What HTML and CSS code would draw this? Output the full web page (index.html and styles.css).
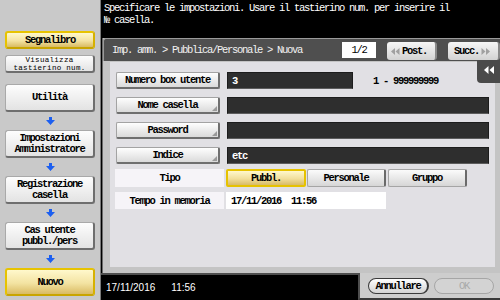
FILE: index.html
```html
<!DOCTYPE html>
<html lang="it">
<head>
<meta charset="utf-8">
<title>Nuova casella</title>
<link rel="stylesheet" href="styles.css">
</head>
<body>
<aside class="side">
  <div class="sbtn hl">Segnalibro</div>
  <div class="sbtn tiny">Visualizza<br>tastierino num.</div>
  <div class="flow">
    <div class="fbtn">Utilità</div>
    <div class="arr"><svg width="9" height="8" viewBox="0 0 9 8"><path d="M3 0h3v3h3L4.5 8 0 3h3z" fill="#1c5ff0"/></svg></div>
    <div class="fbtn">Impostazioni<br>Amministratore</div>
    <div class="arr"><svg width="9" height="8" viewBox="0 0 9 8"><path d="M3 0h3v3h3L4.5 8 0 3h3z" fill="#1c5ff0"/></svg></div>
    <div class="fbtn">Registrazione<br>casella</div>
    <div class="arr"><svg width="9" height="8" viewBox="0 0 9 8"><path d="M3 0h3v3h3L4.5 8 0 3h3z" fill="#1c5ff0"/></svg></div>
    <div class="fbtn">Cas utente<br>pubbl./pers</div>
    <div class="arr"><svg width="9" height="8" viewBox="0 0 9 8"><path d="M3 0h3v3h3L4.5 8 0 3h3z" fill="#1c5ff0"/></svg></div>
    <div class="fbtn hl">Nuovo</div>
  </div>
</aside>
<main class="main">
  <header class="msg">Specificare le impostazioni. Usare il tastierino num. per inserire il<br>№ casella.</header>
  <section class="panel">
    <div class="crumb">
      <span class="path">Imp. amm. &gt; Pubblica/Personale &gt; Nuova</span>
      <span class="page">1/2</span>
      <span class="nav post"><svg width="9" height="7" viewBox="0 0 9 7"><path d="M4 0v7L0 3.5zM8.5 0v7l-4-3.5z" fill="#a0a0a0"/></svg>Post.</span>
      <span class="nav succ">Succ.<svg width="9" height="7" viewBox="0 0 9 7"><path d="M0.5 0v7l4-3.5zM5 0v7l4-3.5z" fill="#a0a0a0"/></svg></span>
    </div>
    <div class="tab"><svg width="10" height="8" viewBox="0 0 10 8"><path d="M4.5 0v8L0 4zM10 0v8L5.5 4z" fill="#fff"/></svg></div>
    <div class="content">
      <div class="row">
        <span class="lbtn">Numero box utente</span>
        <span class="inp short">3</span>
        <span class="range">1 - 999999999</span>
      </div>
      <div class="row">
        <span class="lbtn corner">Nome casella</span>
        <span class="inp long"></span>
      </div>
      <div class="row">
        <span class="lbtn corner">Password</span>
        <span class="inp long"></span>
      </div>
      <div class="row">
        <span class="lbtn corner">Indice</span>
        <span class="inp long">etc</span>
      </div>
      <div class="row opt">
        <span class="lab">Tipo</span>
        <span class="obtn sel">Pubbl.</span>
        <span class="obtn">Personale</span>
        <span class="obtn">Gruppo</span>
      </div>
      <div class="row opt">
        <span class="lab">Tempo in memoria</span>
        <span class="val">17/11/2016&nbsp;&nbsp;11:56</span>
      </div>
    </div>
  </section>
  <footer class="foot">
    <div class="clock"><span>17/11/2016</span><span>11:56</span></div>
    <div class="acts"><span class="pill">Annullare</span><span class="pill off">OK</span></div>
  </footer>
</main>
</body>
</html>
```
FILE: styles.css
```css
* { box-sizing: border-box; }
html, body { margin: 0; padding: 0; }
body {
  width: 500px;
  height: 300px;
  overflow: hidden;
  display: flex;
  background: #000;
  font-family: "Liberation Mono", "DejaVu Sans Mono", monospace;
  font-size: 10.5px;
  letter-spacing: -1.3px;
  color: #000;
}

/* sidebar */
.side {
  width: 101px;
  flex: none;
  background: #c9c9c9;
  border-right: 1px solid #7a7a7a;
  display: flex;
  flex-direction: column;
  align-items: center;
  padding-top: 31px;
}
.sbtn, .fbtn {
  width: 90px;
  display: flex;
  align-items: center;
  justify-content: center;
  text-align: center;
  background: linear-gradient(#fdfdfd, #e3e3e3);
  border: 1px solid #a9a9a9;
  border-right: 2px solid #6e6e6e;
  border-bottom: 2px solid #6e6e6e;
  border-radius: 3px;
  font-weight: bold;
  line-height: 11px;
}
.sbtn { height: 18px; }
.sbtn + .sbtn { margin-top: 6px; }
.sbtn.tiny {
  font-size: 7.5px;
  letter-spacing: 0.3px;
  line-height: 8px;
  font-weight: normal;
}
.hl {
  background: linear-gradient(#fff8cc, #f3e3a2 55%, #d9bb63);
  border: 2px solid #e7c300;
  border-right-color: #d6b100;
  border-bottom-color: #c9a500;
}
.flow {
  margin-top: 11px;
  display: flex;
  flex-direction: column;
  align-items: center;
}
.fbtn { height: 28px; }
.arr {
  height: 18px;
  display: flex;
  align-items: center;
  justify-content: center;
}

/* main */
.main {
  flex: 1;
  display: flex;
  flex-direction: column;
  background: #000;
}
.msg {
  height: 38px;
  flex: none;
  padding: 2px 3px;
  color: #fff;
  line-height: 12px;
}
.panel {
  flex: 1;
  position: relative;
  margin-left: 1px;
  background: #c4c4c4;
  border-left: 1px solid #6a6a6a;
  display: flex;
  flex-direction: column;
}
.crumb {
  height: 23px;
  flex: none;
  display: flex;
  align-items: flex-start;
  padding: 3px 0 0 8px;
  background: #4f4f4f;
  border-top: 1px solid #9a9a9a;
  border-left: 1px solid #9a9a9a;
  border-radius: 3px 0 0 0;
  color: #f2f2f2;
}
.path { flex: 1; line-height: 16px; }
.page {
  width: 34px;
  height: 16px;
  margin-right: 11px;
  background: #fff;
  color: #000;
  text-align: center;
  line-height: 16px;
}
.nav {
  height: 18px;
  display: flex;
  align-items: center;
  gap: 2px;
  background: linear-gradient(#f6f6f6, #d2d2d2);
  border-right: 2px solid #8a8a8a;
  border-radius: 3px;
  color: #000;
  font-weight: bold;
}
.post { width: 50px; margin-right: 11px; padding-left: 4px; }
.succ { width: 52px; padding-left: 6px; }
.tab {
  position: absolute;
  top: 22px;
  right: 0;
  width: 23px;
  height: 23px;
  background: #4a4a4a;
  border-radius: 0 0 0 4px;
  display: flex;
  justify-content: center;
  padding-top: 6px;
}
.content {
  flex: 1;
  margin: 1px 5px 6px 7px;
  background: #e1e0e4;
  padding: 10px 0 0 6px;
}
.row {
  height: 17px;
  display: flex;
  align-items: center;
  margin-bottom: 8px;
}
.lbtn {
  position: relative;
  width: 104px;
  height: 17px;
  margin-right: 7px;
  display: flex;
  align-items: center;
  justify-content: center;
  background: linear-gradient(#fefefe, #dadada);
  border: 1px solid #a3a3a3;
  border-right: 2px solid #6f6f6f;
  border-bottom: 2px solid #6f6f6f;
  border-radius: 2px;
  font-weight: bold;
}
.corner::after {
  content: "";
  position: absolute;
  right: 1px;
  bottom: 1px;
  border-style: solid;
  border-width: 0 0 5px 5px;
  border-color: transparent transparent #9a9a9a transparent;
}
.inp {
  height: 17px;
  display: flex;
  align-items: center;
  padding-left: 4px;
  background: #2e2e2e;
  border: 1px solid #1c1c1c;
  border-bottom-color: #5c5c5c;
  color: #fff;
  font-weight: bold;
}
.short { width: 126px; }
.long { width: 262px; }
.range { margin-left: 20px; font-weight: bold; }
.opt { height: 18px; margin-left: -1px; margin-bottom: 5px; }
.row.opt:nth-child(5) { margin-top: -3px; }
.lab {
  width: 109px;
  height: 100%;
  margin-right: 2px;
  display: flex;
  align-items: center;
  justify-content: center;
  background: #f6f4f8;
  font-weight: bold;
}
.obtn {
  width: 79px;
  height: 18px;
  margin-right: 2px;
  display: flex;
  align-items: center;
  justify-content: center;
  background: linear-gradient(#fbfbfb, #d6d6d6);
  border: 1px solid #a5a5a5;
  border-right: 2px solid #6a6a6a;
  border-radius: 2px;
  font-weight: bold;
}
.obtn.sel {
  width: 80px;
  margin-right: 1px;
  background: linear-gradient(#fff8cc, #f1df9c 55%, #d8bb66);
  border: 2px solid #e6c200;
}
.val {
  width: 160px;
  height: 100%;
  display: flex;
  align-items: center;
  padding-left: 5px;
  background: #fff;
  font-weight: bold;
}
.row.opt:last-child { height: 17px; }

/* footer */
.foot {
  height: 27px;
  flex: none;
  display: flex;
}
.clock {
  width: 257px;
  border-top: 2px solid #4e4e4e;
  background: #000;
  color: #fff;
  font-family: "Liberation Sans", Arial, sans-serif;
  letter-spacing: 0;
  font-size: 10px;
  display: flex;
  align-items: center;
  gap: 16px;
  padding: 0 0 0 5px;
}
.acts {
  flex: 1;
  background: #cdcdcd;
  border-left: 2px solid #4e4e4e;
  border-bottom: 2px solid #3a3a3a;
  display: flex;
  align-items: flex-start;
  gap: 5px;
  padding: 5px 0 0 8px;
}
.pill {
  width: 61px;
  height: 16px;
  display: flex;
  align-items: center;
  justify-content: center;
  border: 1px solid #3a3a3a;
  border-right-width: 2px;
  border-radius: 8px;
  background: linear-gradient(#ffffff, #d2d2d2);
  font-weight: bold;
}
.pill.off {
  width: 60px;
  border: 1px solid #a6a6a6;
  background: #d3d3d3;
  color: #a9a9a9;
  font-weight: normal;
}
```
